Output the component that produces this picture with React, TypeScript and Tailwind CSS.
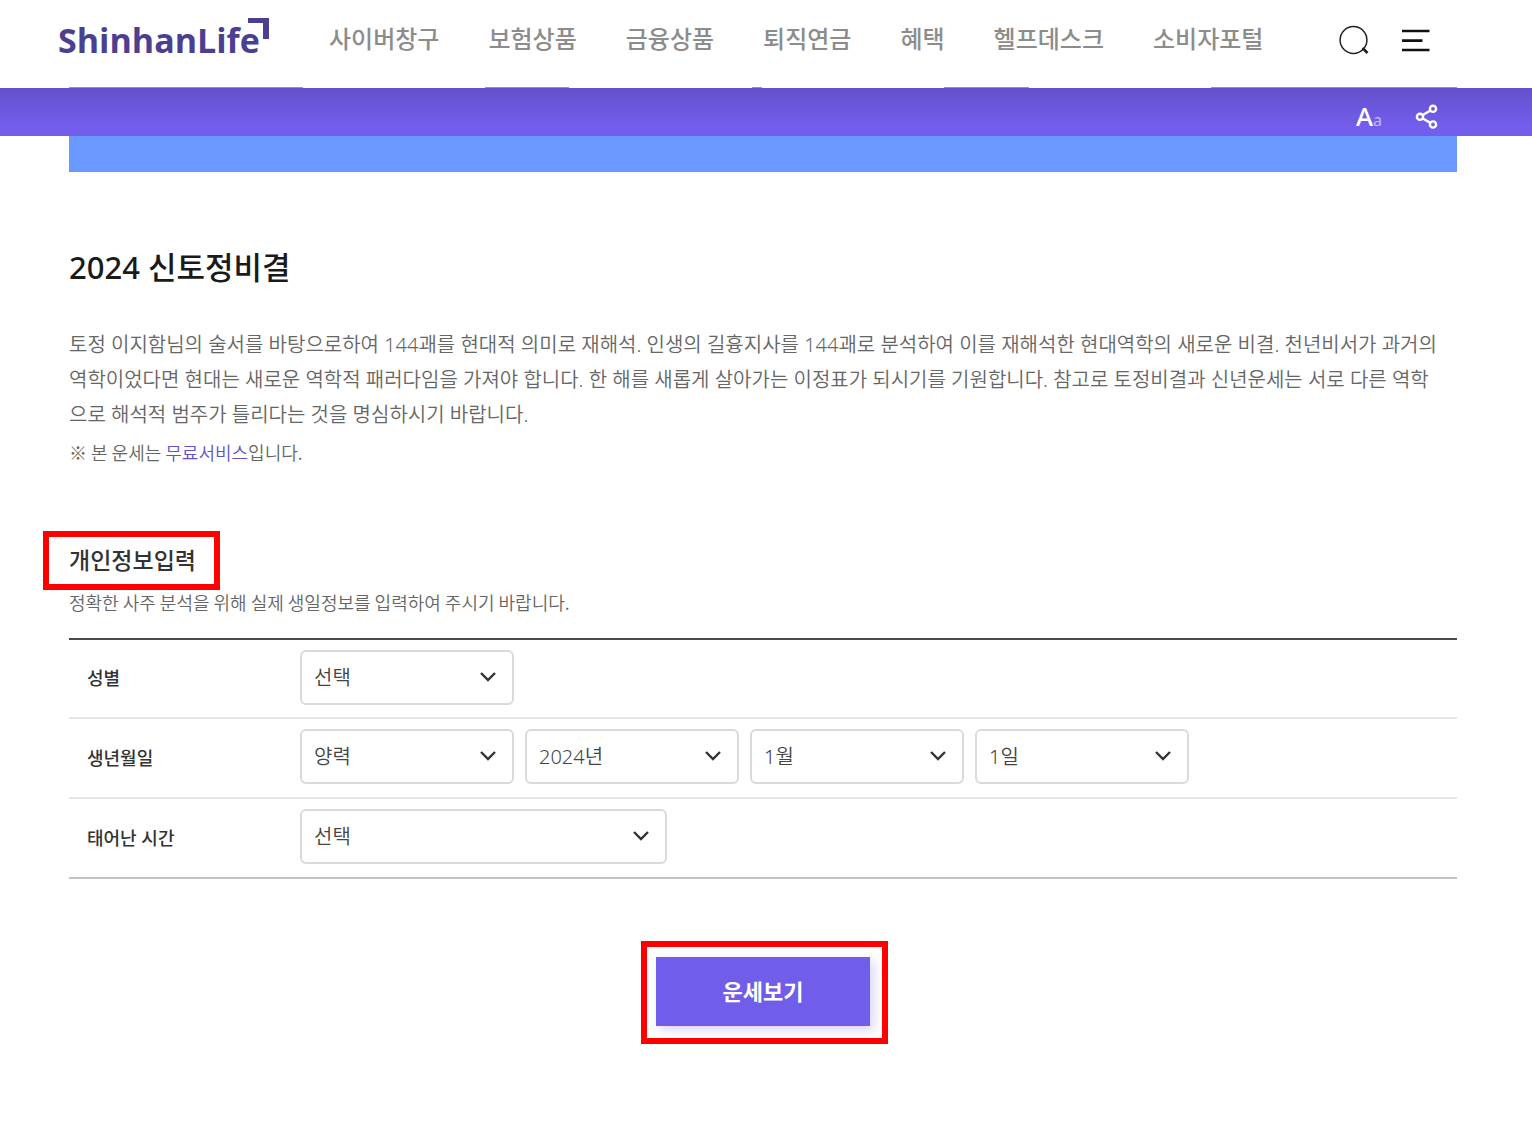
import { useState } from 'react'

const menus = ['사이버창구', '보험상품', '금융상품', '퇴직연금', '혜택', '헬프데스크', '소비자포털']

const years = Array.from({ length: 100 }, (_, i) => `${2024 - i}년`)
const months = Array.from({ length: 12 }, (_, i) => `${i + 1}월`)
const days = Array.from({ length: 31 }, (_, i) => `${i + 1}일`)
const hours = ['선택', '자시', '축시', '인시', '묘시', '진시', '사시', '오시', '미시', '신시', '유시', '술시', '해시']

interface SelectProps {
  id: string
  label?: string
  options: string[]
  wide?: boolean
}

function Select({ id, label, options, wide }: SelectProps) {
  const [value, setValue] = useState(options[0])

  return (
    <div className={`relative ${wide ? 'w-[367px]' : 'w-[214px]'}`}>
      <select
        id={id}
        aria-label={label}
        value={value}
        onChange={(e) => setValue(e.target.value)}
        className="block h-[55px] w-full appearance-none rounded-md border-2 border-[#dadada] bg-white pl-3 pr-12 text-[20px] font-[350] text-[#444]"
      >
        {options.map((o) => (
          <option key={o}>{o}</option>
        ))}
      </select>
      <svg
        className="pointer-events-none absolute right-[18px] top-5 h-3 w-4"
        viewBox="0 0 16 12"
        fill="none"
        stroke="#333"
        strokeWidth="2.4"
      >
        <path d="M1 3 8 10 15 3" />
      </svg>
    </div>
  )
}

function Header() {
  return (
    <header>
      <div className="flex h-[87px] items-start pl-[58px] pr-[101px]">
        <a href="#" className="flex w-[271px] shrink-0 items-start text-[#4b3f92]">
          <span className="pt-4 font-['Open_Sans'] text-[34px] font-bold leading-[48px]">ShinhanLife</span>
          <svg className="-ml-3 mt-[17px] h-[22px] w-[22px]" viewBox="0 0 22 22" fill="currentColor">
            <path d="M0 1h21v21h-6V6H0z" />
          </svg>
        </a>
        <nav className="flex flex-1 gap-[49px] pt-[21px] text-[24px] font-medium leading-9 text-[#8c8c8c]">
          {menus.map((m) => (
            <a key={m} href="#" className="whitespace-nowrap">
              {m}
            </a>
          ))}
        </nav>
        <div className="flex gap-[31px] pt-[25px]">
          <button aria-label="검색">
            <svg className="h-8 w-8" viewBox="0 0 32 32" fill="none" stroke="#222">
              <circle cx="15.5" cy="15" r="13.4" strokeWidth="1.5" />
              <path d="m24.500 23 5 5" strokeWidth="2.6" />
            </svg>
          </button>
          <button aria-label="전체메뉴">
            <svg className="h-8 w-[30px]" viewBox="0 0 30 32" stroke="#111" strokeWidth="2.6">
              <path d="M1 6h27.500M1 15.600h20.500M1 25h27.500" />
            </svg>
          </button>
        </div>
      </div>
    </header>
  )
}

function Banner() {
  return (
    <div>
      {/* sliver of the banner showing under the header */}
      <div className="flex h-px pl-[69px] pr-[75px]">
        <div className="w-[234px] bg-[#6b98ff]" />
        <div className="ml-[182px] w-[84px] bg-[#6b98ff]" />
        <div className="ml-[183px] w-[10px] bg-[#6b98ff]" />
        <div className="ml-[182px] w-[85px] bg-[#6b98ff]" />
        <div className="ml-[182px] flex-1 bg-[#6b98ff]" />
      </div>
      <div className="flex h-12 items-start justify-end bg-linear-to-b from-[#6350ca] to-[#725dec] to-75% pr-[93px]">
        <button aria-label="글자크기" className="mr-[33px] flex items-baseline pt-[10px] leading-9 text-white">
          <span className="font-['Noto_Sans'] text-[26px] font-medium leading-9">A</span>
          <span className="font-['Noto_Sans'] text-base text-[#c3b9f7]">a</span>
        </button>
        <button aria-label="공유하기" className="pt-4">
          <svg className="h-[26px] w-6" viewBox="0 0 24 26" fill="none" stroke="#fff" strokeWidth="2.4">
            <circle cx="5" cy="12.800" r="3.100" />
            <circle cx="18" cy="4.800" r="3.100" />
            <circle cx="18" cy="20.500" r="3.100" />
            <path d="m7.800 11.100 7.600-4.700M7.800 14.500l7.600 4.400" />
          </svg>
        </button>
      </div>
      <div className="pl-[69px] pr-[75px]">
        <div className="h-9 bg-[#6b98ff]" />
      </div>
    </div>
  )
}

export default function App() {
  return (
    <div className="min-h-screen bg-white font-['Noto_Sans','Noto_Sans_CJK_KR',sans-serif] text-[#666]">
      <Header />
      <Banner />

      <main className="pl-[69px] pr-[75px] pb-20">
        <h1 className="pt-[73px] text-[31px] font-medium leading-[44px] text-[#1a1a1a]">2024 신토정비결</h1>

        <p className="mt-[38px] break-all text-[20px] font-[350] leading-[35px]">
          토정 이지함님의 술서를 바탕으로하여 144괘를 현대적 의미로 재해석. 인생의 길흉지사를 144괘로 분석하여 이를 재해석한 현대역학의 새로운 비결. 천년비서가 과거의
          <br />
          역학이었다면 현대는 새로운 역학적 패러다임을 가져야 합니다. 한 해를 새롭게 살아가는 이정표가 되시기를 기원합니다. 참고로 토정비결과 신년운세는 서로 다른 역학
          <br />
          으로 해석적 범주가 틀리다는 것을 명심하시기 바랍니다.
        </p>
        <p className="mt-[6px] font-['Noto_Sans_CJK_KR',sans-serif] text-[18px] font-[350] leading-7">
          ※ 본 운세는 <span className="text-[#6350d0]">무료서비스</span>입니다.
        </p>

        <form onSubmit={(e) => e.preventDefault()}>
          <div className="mt-[78px] flex">
            <h2 className="relative text-[23px] font-medium leading-8 text-[#333]">
              개인정보입력
              <span className="pointer-events-none absolute -left-[26px] -right-6 -top-[13px] -bottom-[14px] border-6 border-[#f00]" />
            </h2>
          </div>
          <p className="mt-3 font-['Noto_Sans_CJK_KR',sans-serif] text-[18px] font-[350] leading-7">
            정확한 사주 분석을 위해 실제 생일정보를 입력하여 주시기 바랍니다.
          </p>

          <table className="mt-[22px] w-full border-t-2 border-b-2 border-t-[#4a4a4a] border-b-[#c2c2c2] text-left">
            <tbody>
              <tr className="border-b-2 border-[#e6e6e6]">
                <th scope="row" className="w-[231px] pl-[18px] text-[18px] font-medium text-[#333]">
                  <label htmlFor="gender">성별</label>
                </th>
                <td className="pt-[10px] pb-3">
                  <Select id="gender" options={['선택', '남자', '여자']} />
                </td>
              </tr>
              <tr className="border-b-2 border-[#e6e6e6]">
                <th scope="row" className="pl-[18px] text-[18px] font-medium text-[#333]">
                  <label htmlFor="calendar">생년월일</label>
                </th>
                <td className="pt-[10px] pb-[13px]">
                  <div className="flex gap-[11px]">
                    <Select id="calendar" options={['양력', '음력']} />
                    <Select id="year" label="년" options={years} />
                    <Select id="month" label="월" options={months} />
                    <Select id="day" label="일" options={days} />
                  </div>
                </td>
              </tr>
              <tr>
                <th scope="row" className="pl-[18px] text-[18px] font-medium text-[#333]">
                  <label htmlFor="hour">태어난 시간</label>
                </th>
                <td className="pt-[10px] pb-[13px]">
                  <Select id="hour" options={hours} wide />
                </td>
              </tr>
            </tbody>
          </table>

          <div className="mt-[78px] flex justify-center">
            <div className="relative">
              <button className="block h-[69px] w-[214px] bg-[#705dea] text-[22px] font-bold text-white shadow-[4px_4px_10px_#705dea40]">
                운세보기
              </button>
              <span className="pointer-events-none absolute -left-[15px] -right-[18px] -top-4 -bottom-[18px] border-6 border-[#f00]" />
            </div>
          </div>
        </form>
      </main>
    </div>
  )
}
